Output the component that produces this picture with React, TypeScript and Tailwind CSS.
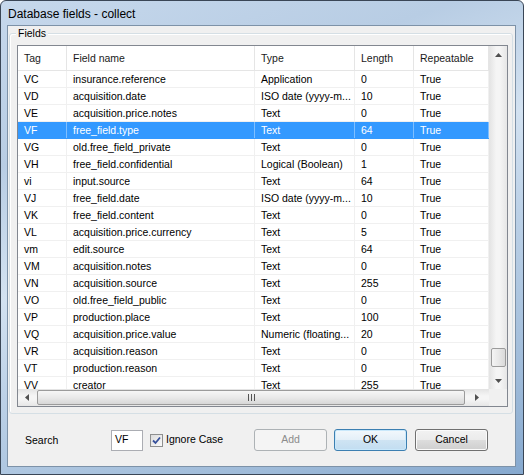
import React from 'react';

type Row = [string, string, string, string, string];

const rows: Row[] = [
  ['VC', 'insurance.reference', 'Application', '0', 'True'],
  ['VD', 'acquisition.date', 'ISO date (yyyy-m...', '10', 'True'],
  ['VE', 'acquisition.price.notes', 'Text', '0', 'True'],
  ['VF', 'free_field.type', 'Text', '64', 'True'],
  ['VG', 'old.free_field_private', 'Text', '0', 'True'],
  ['VH', 'free_field.confidential', 'Logical (Boolean)', '1', 'True'],
  ['vi', 'input.source', 'Text', '64', 'True'],
  ['VJ', 'free_field.date', 'ISO date (yyyy-m...', '10', 'True'],
  ['VK', 'free_field.content', 'Text', '0', 'True'],
  ['VL', 'acquisition.price.currency', 'Text', '5', 'True'],
  ['vm', 'edit.source', 'Text', '64', 'True'],
  ['VM', 'acquisition.notes', 'Text', '0', 'True'],
  ['VN', 'acquisition.source', 'Text', '255', 'True'],
  ['VO', 'old.free_field_public', 'Text', '0', 'True'],
  ['VP', 'production.place', 'Text', '100', 'True'],
  ['VQ', 'acquisition.price.value', 'Numeric (floating...', '20', 'True'],
  ['VR', 'acquisition.reason', 'Text', '0', 'True'],
  ['VT', 'production.reason', 'Text', '0', 'True'],
  ['VV', 'creator', 'Text', '255', 'True'],
];

const cols = [
  { label: 'Tag', w: 'w-[49px]' },
  { label: 'Field name', w: 'w-[188px]' },
  { label: 'Type', w: 'w-[100px]' },
  { label: 'Length', w: 'w-[59px]' },
  { label: 'Repeatable', w: 'w-[75px]' },
];

const Arrow = ({ dir }: { dir: 'up' | 'down' | 'left' | 'right' }) => {
  const pts = {
    up: '0,4 7,4 3.5,0',
    down: '0,0 7,0 3.5,4',
    left: '4,0 4,7 0,3.5',
    right: '0,0 0,7 4,3.5',
  }[dir];
  const vertical = dir === 'up' || dir === 'down';
  return (
    <svg width={vertical ? 7 : 4} height={vertical ? 4 : 7} viewBox={vertical ? '0 0 7 4' : '0 0 4 7'}>
      <polygon points={pts} fill="#505050" />
    </svg>
  );
};

const ListView = () => (
  <div className="ml-[7px] mt-[11px] w-[491px] h-[362px] border border-[#828790] bg-white flex flex-col">
    <div className="flex h-[343px]">
      <div className="w-[471px] overflow-hidden">
        <div className="flex h-[25px] border-b border-[#e5e5e5]">
          {cols.map((c) => (
            <div key={c.label} className={`${c.w} shrink-0 h-full border-r border-[#e5e5e5] pl-[6px] pt-[1px] flex items-center text-[#1a1a1a]`}>
              {c.label}
            </div>
          ))}
        </div>
        {rows.map((r, i) => {
          const sel = r[0] === 'VF';
          return (
            <div key={i} className={`flex h-[17px] border-b ${sel ? 'bg-[#3399ff] text-white border-[#3399ff]' : 'border-[#f0f0f0] text-black'}`}>
              {r.map((cell, j) => (
                <div key={j} className={`${cols[j].w} shrink-0 h-full border-r ${sel ? 'border-[#7fbfff]' : 'border-[#f0f0f0]'} pl-[6px] pt-[1px] flex items-center whitespace-nowrap overflow-hidden`}>
                  {cell}
                </div>
              ))}
            </div>
          );
        })}
      </div>
      <div className="w-[18px] h-full flex flex-col bg-[linear-gradient(to_right,#e3e3e3,#f5f5f5_40%,#f5f5f5_60%,#e6e6e6)]">
        <div className="h-[17px] flex items-center justify-center">
          <Arrow dir="up" />
        </div>
        <div className="flex-1 flex flex-col justify-end pb-[5px] items-center">
          <div className="w-[15px] h-[19px] rounded-[2px] border border-[#9b9b9b] bg-[linear-gradient(to_right,#f4f4f4,#e8e8e8_50%,#d9d9d9)]" />
        </div>
        <div className="h-[17px] flex items-center justify-center">
          <Arrow dir="down" />
        </div>
      </div>
    </div>
    <div className="flex h-[17px]">
      <div className="w-[471px] h-full flex items-center bg-[linear-gradient(to_bottom,#e3e3e3,#f5f5f5_40%,#f5f5f5_60%,#e6e6e6)]">
        <div className="w-[17px] flex justify-center">
          <Arrow dir="left" />
        </div>
        <div className="ml-[2px] w-[428px] h-[15px] rounded-[2px] border border-[#9b9b9b] bg-[linear-gradient(to_bottom,#f6f6f6,#e9e9e9_50%,#d7d7d7)] flex items-center justify-center">
          <svg width="7" height="7" viewBox="0 0 7 7">
            <rect x="0" y="0" width="1" height="7" fill="#555" />
            <rect x="3" y="0" width="1" height="7" fill="#555" />
            <rect x="6" y="0" width="1" height="7" fill="#555" />
          </svg>
        </div>
        <div className="flex-1 flex justify-center">
          <Arrow dir="right" />
        </div>
      </div>
      <div className="w-[18px] h-full bg-[#f0f0f0]" />
    </div>
  </div>
);

const Button = ({ label, kind }: { label: string; kind: 'normal' | 'default' | 'disabled' }) => {
  const cls =
    kind === 'disabled'
      ? 'border-[#adb2b5] bg-[#f4f4f4] text-[#8c8c8c]'
      : kind === 'default'
      ? 'border-[#3c7fb1] bg-[linear-gradient(to_bottom,#f2f8fc,#e3eff8_50%,#cfe4f3_50%,#c2ddf1)] text-black shadow-[inset_0_0_0_1px_#c9e8fb]'
      : 'border-[#707070] bg-[linear-gradient(to_bottom,#f2f2f2,#ebebeb_50%,#dddddd_50%,#cfcfcf)] text-black shadow-[inset_0_0_0_1px_#fbfbfb]';
  return (
    <div className={`w-[73px] h-[22px] shrink-0 rounded-[3px] border flex items-center justify-center ${cls}`}>
      {label}
    </div>
  );
};

export default function App() {
  return (
    <div className="w-[524px] h-[475px] flex flex-col border border-[#3a4656] rounded-t-[6px] overflow-hidden bg-[linear-gradient(160deg,#c6d8ec_0%,#b8cde4_25%,#d3e2f1_45%,#bcd1e7_60%,#9fbbd9_85%,#86a9cf_100%)] font-['Liberation_Sans',Arial,sans-serif] text-[10.5px]">
      <div className="h-[24px] shrink-0 pl-[7px] pt-[1px] flex items-center text-[12px] text-black">
        Database fields - collect
      </div>
      <div className="ml-[6px] w-[509px] h-[442px] shrink-0 border border-[#7d92a8] bg-[#f0f0f0] flex flex-col">
        <div className="relative mt-[7px] ml-[1px] w-[504px] h-[381px] shrink-0 border border-[#d5dfe5] rounded-[3px] shadow-[inset_1px_1px_0_#ffffff] flex flex-col">
          <span className="absolute -top-[8px] left-[6px] px-[2px] bg-[#f0f0f0] text-black leading-[14px]">Fields</span>
          <ListView />
        </div>
        <div className="mt-[15px] pl-[17px] h-[22px] flex items-center text-black">
          <div className="w-[86px] shrink-0 pt-[1px]">Search</div>
          <div className="w-[32px] h-[21px] shrink-0 border border-[#abadb3] bg-white pl-[3px] flex items-center">
            VF
          </div>
          <div className="ml-[7px] w-[104px] shrink-0 flex items-center">
            <div className="w-[13px] h-[13px] border border-[#8e8f8f] bg-[linear-gradient(to_bottom_right,#dcdcdc,#fafafa)] flex items-center justify-center">
              <svg width="9" height="9" viewBox="0 0 9 9">
                <path d="M1 4.5 L3.5 7 L8 1.5" stroke="#36509b" strokeWidth="1.8" fill="none" />
              </svg>
            </div>
            <span className="ml-[3px]">Ignore Case</span>
          </div>
          <Button label="Add" kind="disabled" />
          <div className="w-[7px] shrink-0" />
          <Button label="OK" kind="default" />
          <div className="w-[8px] shrink-0" />
          <Button label="Cancel" kind="normal" />
        </div>
      </div>
    </div>
  );
}
